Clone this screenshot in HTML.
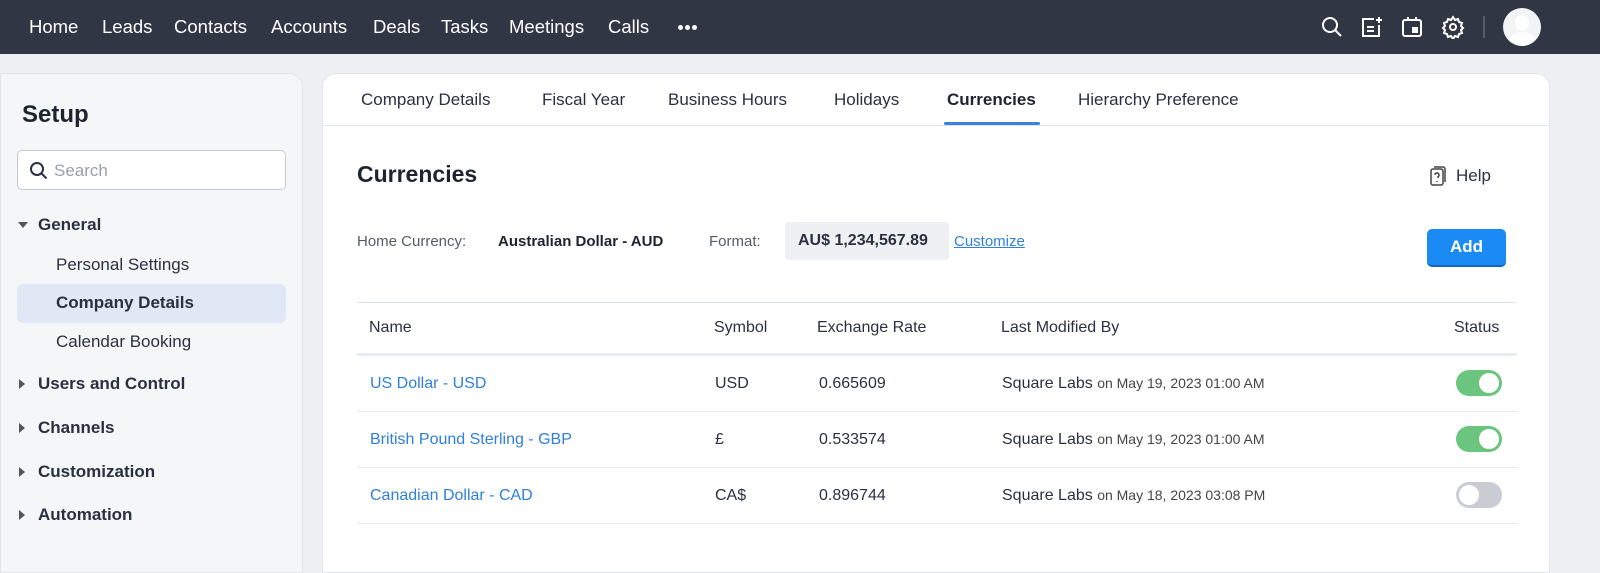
<!DOCTYPE html><html><head><style>
*{margin:0;padding:0;box-sizing:border-box}
body{width:1600px;height:546px;overflow:hidden;background:#eef0f4;font-family:"Liberation Sans",sans-serif;color:#2b3040;position:relative}
.nav{position:absolute;left:0;top:0;width:1600px;height:54px;background:#313644;color:#fff;font-size:18.5px}
.nav span{position:absolute;top:16px}
.side{position:absolute;left:0;top:73px;width:303px;height:500px;background:#f5f6f8;border:1px solid #e1e4ea;border-radius:0 14px 0 0}
.main{position:absolute;left:322px;top:73px;width:1228px;height:500px;background:#fff;border:1px solid #e1e4ea;border-radius:14px 14px 0 0}
.a{position:absolute;white-space:nowrap}
.tri{position:absolute;width:0;height:0}
.tog{position:absolute;left:1133px;width:46px;height:26px;border-radius:13px;background:#6cc57f}
.tog i{position:absolute;right:3px;top:3px;width:20px;height:20px;border-radius:50%;background:#fff}
.tog.off{background:#c9ccd3}.tog.off i{left:3px;right:auto}
.lnk{color:#2f80d9}
</style></head><body>
<div class="nav">
<span style="left:29px">Home</span><span style="left:102px">Leads</span><span style="left:174px">Contacts</span><span style="left:271px">Accounts</span><span style="left:373px">Deals</span><span style="left:441px">Tasks</span><span style="left:509px">Meetings</span><span style="left:608px">Calls</span>
<div style="position:absolute;left:678px;top:25px;width:5px;height:5px;border-radius:50%;background:#fff"></div><div style="position:absolute;left:685px;top:25px;width:5px;height:5px;border-radius:50%;background:#fff"></div><div style="position:absolute;left:692px;top:25px;width:5px;height:5px;border-radius:50%;background:#fff"></div>
<svg style="position:absolute;left:1320px;top:15px" width="24" height="24" fill="none" stroke="#fff" stroke-width="2"><circle cx="10" cy="10" r="7"/><path d="M15 15l6 6"/></svg>
<svg style="position:absolute;left:1360px;top:15px" width="24" height="24" fill="none" stroke="#fff" stroke-width="2"><path d="M14 4H3v17h16V10"/><path d="M7 12h7M7 16h7M19 2v6M16 5h6"/></svg>
<svg style="position:absolute;left:1400px;top:15px" width="24" height="24" fill="none" stroke="#fff" stroke-width="2"><rect x="3" y="5" width="18" height="16" rx="2"/><path d="M8 2v4M16 2v4"/><rect x="13" y="13" width="4" height="4" fill="#fff"/></svg>
<svg style="position:absolute;left:1441px;top:15px" width="24" height="24" fill="none" stroke="#fff" stroke-width="2"><circle cx="12" cy="12" r="3"/><path d="M12 2l2 3 3-1 1 3 3 1-1 3 2 2-2 2 1 3-3 1-1 3-3-1-2 3-2-3-3 1-1-3-3-1 1-3-2-2 2-2-1-3 3-1 1-3 3 1z"/></svg>
<div style="position:absolute;left:1483px;top:16px;width:2px;height:22px;background:#555b69"></div>
<div style="position:absolute;left:1503px;top:8px;width:38px;height:38px;border-radius:50%;background:#f2f3f5;overflow:hidden"><div style="position:absolute;left:12px;top:7px;width:14px;height:16px;border-radius:50%;background:#fff"></div><div style="position:absolute;left:6px;top:24px;width:26px;height:20px;border-radius:50%;background:#fff"></div></div>
</div>
<div class="side">
<div class="a" style="left:21px;top:27px;font-size:24px;font-weight:bold;color:#1e2330">Setup</div>
<div class="a" style="left:16px;top:76px;width:269px;height:40px;background:#fff;border:1px solid #c5cad3;border-radius:5px"></div>
<svg style="position:absolute;left:28px;top:87px" width="20" height="20" fill="none" stroke="#2b3040" stroke-width="2"><circle cx="8" cy="8" r="6"/><path d="M12.5 12.5l5 5"/></svg>
<div class="a" style="left:53px;top:87px;font-size:17px;color:#9aa0ab">Search</div>
<div class="tri" style="left:17px;top:148px;border-left:5px solid transparent;border-right:5px solid transparent;border-top:6px solid #555"></div>
<div class="a" style="left:37px;top:141px;font-size:17px;font-weight:bold">General</div>
<div class="a" style="left:55px;top:181px;font-size:17px">Personal Settings</div>
<div class="a" style="left:16px;top:210px;width:269px;height:39px;background:#dfe8f4;border-radius:6px"></div>
<div class="a" style="left:55px;top:219px;font-size:17px;font-weight:bold">Company Details</div>
<div class="a" style="left:55px;top:258px;font-size:17px">Calendar Booking</div>
<div class="tri" style="left:18px;top:305px;border-top:5px solid transparent;border-bottom:5px solid transparent;border-left:6px solid #555"></div>
<div class="a" style="left:37px;top:300px;font-size:17px;font-weight:bold">Users and Control</div>
<div class="tri" style="left:18px;top:349px;border-top:5px solid transparent;border-bottom:5px solid transparent;border-left:6px solid #555"></div>
<div class="a" style="left:37px;top:344px;font-size:17px;font-weight:bold">Channels</div>
<div class="tri" style="left:18px;top:393px;border-top:5px solid transparent;border-bottom:5px solid transparent;border-left:6px solid #555"></div>
<div class="a" style="left:37px;top:388px;font-size:17px;font-weight:bold">Customization</div>
<div class="tri" style="left:18px;top:436px;border-top:5px solid transparent;border-bottom:5px solid transparent;border-left:6px solid #555"></div>
<div class="a" style="left:37px;top:431px;font-size:17px;font-weight:bold">Automation</div>
</div>
<div class="main">
<div style="position:absolute;left:0;top:51px;width:100%;height:1px;background:#dfe3ea"></div>
<div class="a" style="left:38px;top:16px;font-size:17px">Company Details</div>
<div class="a" style="left:219px;top:16px;font-size:17px">Fiscal Year</div>
<div class="a" style="left:345px;top:16px;font-size:17px">Business Hours</div>
<div class="a" style="left:511px;top:16px;font-size:17px">Holidays</div>
<div class="a" style="left:624px;top:16px;font-size:17px;font-weight:bold;color:#1e2330">Currencies</div>
<div style="position:absolute;left:621px;top:48px;width:96px;height:3px;background:#3b82e6;border-radius:2px"></div>
<div class="a" style="left:755px;top:16px;font-size:17px">Hierarchy Preference</div>
<div class="a" style="left:34px;top:87px;font-size:23px;font-weight:bold;color:#1e2330">Currencies</div>
<svg style="position:absolute;left:1106px;top:91px" width="18" height="22" fill="none" stroke="#444" stroke-width="1.5"><rect x="2" y="4" width="12" height="16" rx="2"/><path d="M5 2h9a2 2 0 0 1 2 2v13"/><path d="M6 10a2 2 0 1 1 3 1.7V13M8 16v1"/></svg>
<div class="a" style="left:1133px;top:92px;font-size:17px">Help</div>
<div class="a" style="left:34px;top:159px;font-size:15px;color:#555b66">Home Currency:</div>
<div class="a" style="left:175px;top:159px;font-size:15px;font-weight:bold;color:#1e2330">Australian Dollar - AUD</div>
<div class="a" style="left:386px;top:159px;font-size:15px;color:#555b66">Format:</div>
<div class="a" style="left:462px;top:148px;width:164px;height:38px;background:#eef0f4;border-radius:3px"></div>
<div class="a" style="left:475px;top:158px;font-size:16px;font-weight:bold;color:#2b3040">AU$ 1,234,567.89</div>
<div class="a lnk" style="left:631px;top:159px;font-size:15px;text-decoration:underline">Customize</div>
<div class="a" style="left:1104px;top:155px;width:79px;height:38px;background:#1a8af5;border-radius:5px;border-bottom:2px solid #1466c0;color:#fff;font-weight:bold;font-size:17px;text-align:center;line-height:36px">Add</div>
<div style="position:absolute;left:34px;top:228px;width:1160px;height:1px;background:#dde3ec"></div>
<div style="position:absolute;left:34px;top:279px;width:1160px;height:3px;background:#e8ecf2"></div>
<div class="a" style="left:46px;top:245px;font-size:16px">Name</div>
<div class="a" style="left:391px;top:245px;font-size:16px">Symbol</div>
<div class="a" style="left:494px;top:245px;font-size:16px">Exchange Rate</div>
<div class="a" style="left:678px;top:245px;font-size:16px">Last Modified By</div>
<div class="a" style="left:1131px;top:245px;font-size:16px">Status</div>
<div class="a lnk" style="left:47px;top:301px;font-size:16px">US Dollar - USD</div>
<div class="a" style="left:392px;top:301px;font-size:16px">USD</div>
<div class="a" style="left:496px;top:301px;font-size:16px">0.665609</div>
<div class="a" style="left:679px;top:301px;font-size:16px">Square Labs <span style="font-size:14px;color:#444">on May 19, 2023 01:00 AM</span></div>
<div class="tog" style="top:296px"><i></i></div>
<div style="position:absolute;left:34px;top:337px;width:1160px;height:1px;background:#e8ebf0"></div>
<div class="a lnk" style="left:47px;top:357px;font-size:16px">British Pound Sterling - GBP</div>
<div class="a" style="left:392px;top:357px;font-size:16px">£</div>
<div class="a" style="left:496px;top:357px;font-size:16px">0.533574</div>
<div class="a" style="left:679px;top:357px;font-size:16px">Square Labs <span style="font-size:14px;color:#444">on May 19, 2023 01:00 AM</span></div>
<div class="tog" style="top:352px"><i></i></div>
<div style="position:absolute;left:34px;top:393px;width:1160px;height:1px;background:#e8ebf0"></div>
<div class="a lnk" style="left:47px;top:413px;font-size:16px">Canadian Dollar - CAD</div>
<div class="a" style="left:392px;top:413px;font-size:16px">CA$</div>
<div class="a" style="left:496px;top:413px;font-size:16px">0.896744</div>
<div class="a" style="left:679px;top:413px;font-size:16px">Square Labs <span style="font-size:14px;color:#444">on May 18, 2023 03:08 PM</span></div>
<div class="tog off" style="top:408px"><i></i></div>
<div style="position:absolute;left:34px;top:449px;width:1160px;height:1px;background:#e8ebf0"></div>
</div>
</body></html>
